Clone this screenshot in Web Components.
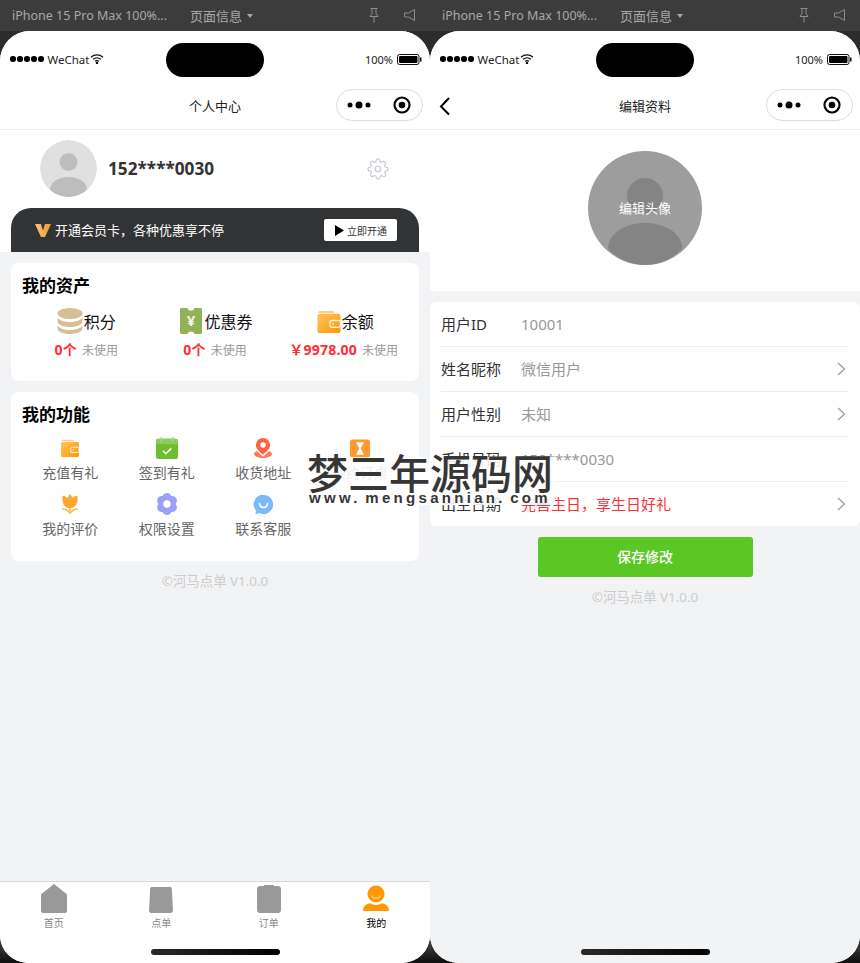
<!DOCTYPE html>
<html lang="zh">
<head>
<meta charset="utf-8">
<title>个人中心</title>
<style>
  html, body { margin: 0; padding: 0; height: 963px; overflow: hidden; }
  body {
    background: linear-gradient(#2c2c2c 0, #2c2c2c 925px, #4a4a4a 938px, #0e0e0e 963px);
    font-family: "Noto Sans", "Noto Sans CJK SC", sans-serif;
    position: relative;
  }
  .screens { display: flex; width: 860px; height: 963px; }
</style>
</head>
<body>
<div class="screens">

  <sim-column title-text="个人中心">
    <profile-head name="152****0030"></profile-head>
    <vip-banner text="开通会员卡，各种优惠享不停" action="立即开通"></vip-banner>
    <page-body>
      <section-card heading="我的资产">
        <div style="display:grid;grid-template-columns:repeat(3,1fr);padding-top:10px">
          <asset-item icon="coins" label="积分" value="0个"></asset-item>
          <asset-item icon="ticket" label="优惠券" value="0个"></asset-item>
          <asset-item icon="wallet" label="余额" value="￥9978.00"></asset-item>
        </div>
      </section-card>
      <section-card heading="我的功能" tall>
        <div style="display:grid;grid-template-columns:repeat(4,1fr);row-gap:10px;padding-top:10px">
          <func-item icon="wallet" label="充值有礼"></func-item>
          <func-item icon="calendar" label="签到有礼"></func-item>
          <func-item icon="pin" label="收货地址"></func-item>
          <func-item icon="hourglass" label="预约订桌"></func-item>
          <func-item icon="tulip" label="我的评价"></func-item>
          <func-item icon="flower" label="权限设置"></func-item>
          <func-item icon="smile" label="联系客服"></func-item>
        </div>
      </section-card>
      <copy-line></copy-line>
    </page-body>
    <tab-bar slot="footer">
      <tab-item icon="home" label="首页"></tab-item>
      <tab-item icon="bag" label="点单"></tab-item>
      <tab-item icon="order" label="订单"></tab-item>
      <tab-item icon="me" label="我的" active></tab-item>
    </tab-bar>
  </sim-column>

  <sim-column title-text="编辑资料" back tinted>
    <avatar-edit></avatar-edit>
    <page-body flush>
      <form-card>
        <form-row label="用户ID" value="10001"></form-row>
        <form-row label="姓名昵称" value="微信用户" arrow></form-row>
        <form-row label="用户性别" value="未知" arrow></form-row>
        <form-row label="手机号码" value="152****0030"></form-row>
        <form-row label="出生日期" value="完善生日，享生日好礼" arrow warn last></form-row>
      </form-card>
      <save-button text="保存修改"></save-button>
      <copy-line></copy-line>
    </page-body>
    <home-bar slot="footer"></home-bar>
  </sim-column>

</div>
<water-mark></water-mark>

<script>
const ICONS = {
  coins: `<svg viewBox="0 0 26 26" width="26" height="26"><g fill="#d5bf93">
    <ellipse cx="13" cy="5.5" rx="12.5" ry="5.5"/>
    <path d="M.5 9.5c2 3 7 4.5 12.5 4.5s10.500-1.500 12.500-4.500v4c0 3-5.500 5.500-12.500 5.500S.5 16.500.5 13.500z"/>
    <path d="M.5 17.500c2 3 7 4.500 12.500 4.500s10.500-1.500 12.500-4.500v3c0 3-5.500 5.500-12.500 5.500S.5 23.500.5 20.500z"/></g></svg>`,
  ticket: `<svg viewBox="0 0 22 26" width="22" height="26">
    <path d="M1.500 0H7.500c.3 1.700 1.700 2.600 3.500 2.600S14.200 1.700 14.500 0h6c.8 0 1.500.7 1.500 1.500v23c0 .8-.7 1.500-1.500 1.500h-6c-.3-1.700-1.700-2.600-3.500-2.600S7.800 24.300 7.500 26h-6C.7 26 0 25.300 0 24.500v-23C0 .7.700 0 1.500 0z" fill="#91b355"/>
    <text x="11" y="18" text-anchor="middle" font-size="15" font-weight="700" fill="#f2f6e8" font-family="Noto Sans, sans-serif">¥</text></svg>`,
  wallet: `<svg viewBox="0 0 24 24" width="100%" height="100%"><defs><linearGradient id="wg" x1="0" y1="0" x2="1" y2="1"><stop offset="0" stop-color="#ffc65c"/><stop offset="1" stop-color="#ff9500"/></linearGradient></defs>
    <path d="M1.500 1h15c.6 0 1 .4 1 1v1h-16.500z" fill="#ffcf80"/>
    <rect x="0" y="4" width="24" height="20" rx="2" fill="url(#wg)"/>
    <rect x="13" y="11" width="11" height="7" rx="2" fill="none" stroke="#fff3dc" stroke-width="1.400"/>
    <circle cx="16.500" cy="14.500" r="1" fill="#fff3dc"/></svg>`,
  calendar: `<svg viewBox="0 0 24 24" width="100%" height="100%">
    <rect x="0" y="2" width="24" height="22" rx="2.500" fill="#6fbe30"/>
    <rect x="0" y="2" width="24" height="6" rx="2.500" fill="#8ccc58"/>
    <rect x="5" y="0" width="1.600" height="5" fill="#a9d983"/><rect x="17.400" y="0" width="1.600" height="5" fill="#a9d983"/>
    <path d="M7.500 15l3.200 3.200 6-5.800" fill="none" stroke="#fff" stroke-width="1.600"/></svg>`,
  pin: `<svg viewBox="0 0 24 24" width="100%" height="100%"><path d="M12 0a8.500 8.500 0 0 1 8.500 8.500c0 4.500-4.500 8.500-8.500 11.500-4-3-8.500-7-8.500-11.500A8.500 8.500 0 0 1 12 0z" fill="#ff6240"/>
    <circle cx="12" cy="8.500" r="3.300" fill="#fff"/>
    <path d="M5 15.500c-2.500.9-3.800 2.200-3.800 3.700C1.200 21.900 6 24 12 24s10.800-2.100 10.800-4.800c0-1.500-1.300-2.800-3.800-3.700-1.600 2.300-4.200 4.600-7 6.600-2.800-2-5.400-4.300-7-6.600z" fill="#ff7a5c"/></svg>`,
  hourglass: `<svg viewBox="0 0 22 20" width="100%" height="100%"><rect width="22" height="20" rx="3" fill="#ff9a2e"/>
    <path d="M7 4h8M7 16h8" stroke="#fff" stroke-width="1.600"/><path d="M8 4.500h6c0 3-2 4-2 5.500s2 2.500 2 5.500H8c0-3 2-4 2-5.500S8 7.500 8 4.500z" fill="#fff"/></svg>`,
  tulip: `<svg viewBox="0 0 24 24" width="100%" height="100%">
    <path d="M3 2c3 .3 5 1.500 6 3 .7-2 1.700-3.600 3-5 1.300 1.400 2.300 3 3 5 1-1.500 3-2.700 6-3 .5 7-.5 14-9 15C3.500 16 2.500 9 3 2z" fill="#ffa52c"/>
    <path d="M12 17v6M2.500 18c3.500 0 7 1.700 9.500 5 2.500-3.300 6-5 9.500-5" fill="none" stroke="#ffb650" stroke-width="1.800"/></svg>`,
  flower: `<svg viewBox="0 0 24 24" width="100%" height="100%"><path fill-rule="evenodd" fill="#9aa2f8" d="M12 0c2.300 0 4 1.400 4.700 3.300 2-.4 4.200.4 5.400 2.300 1.100 2 .8 4.300-.5 5.900-.2.300-.2.700 0 1 1.300 1.600 1.600 3.900.5 5.900-1.200 1.900-3.400 2.700-5.400 2.300C16 22.600 14.300 24 12 24s-4-1.400-4.700-3.300c-2 .4-4.200-.4-5.400-2.300-1.100-2-.8-4.300.5-5.900.2-.3.200-.7 0-1C1.100 9.900.8 7.600 1.900 5.600 3.100 3.700 5.300 2.900 7.300 3.300 8 1.400 9.700 0 12 0zm0 8a4 4 0 1 0 0 8 4 4 0 0 0 0-8z"/></svg>`,
  smile: `<svg viewBox="0 0 24 24" width="100%" height="100%"><path d="M12 1a11 11 0 1 1-5 20.800c-1.400.8-3 1.200-4.800 1.200 1-1.100 1.400-2.400 1.300-3.800A11 11 0 0 1 12 1z" fill="#7db8fb"/>
    <path d="M7.500 11c.5 3 2.300 4.500 4.500 4.500s4-1.500 4.500-4.500" fill="none" stroke="#fff" stroke-width="1.800" stroke-linecap="round"/></svg>`,
  home: `<svg viewBox="0 0 26 29" width="26" height="29"><path d="M13 0l12 9.500c.6.500 1 1.200 1 2V27c0 1.100-.9 2-2 2H2c-1.100 0-2-.9-2-2V11.500c0-.8.400-1.500 1-2z" fill="#999"/></svg>`,
  bag: `<svg viewBox="0 0 24 26" width="24" height="26"><path d="M3 0h18c1 0 1.700.7 1.800 1.600L24 23.500c.1 1.400-1 2.500-2.400 2.500H2.400C1 26-.1 24.900 0 23.500L1.200 1.600C1.300.7 2 0 3 0z" fill="#999"/></svg>`,
  order: `<svg viewBox="0 0 24 28" width="24" height="28"><path d="M7 1c0-.6.400-1 1-1h8c.6 0 1 .4 1 1h4c1.700 0 3 1.300 3 3V25c0 1.700-1.300 3-3 3H3c-1.700 0-3-1.300-3-3V4c0-1.700 1.300-3 3-3z" fill="#999"/></svg>`,
  me: `<svg viewBox="0 0 26 26" width="26" height="26"><circle cx="13" cy="9" r="8.500" fill="#ff9800"/>
    <path d="M8.500 10.500c1 2 2.700 3 4.500 3s3.500-1 4.500-3" fill="none" stroke="#ffd28a" stroke-width="1.200"/>
    <path d="M0 25c.5-4 3.500-6.200 7-6.700 3.500 2.200 8.500 2.200 12 0 3.500.5 6.500 2.700 7 6.700 0 .6-.4 1-1 1H1c-.6 0-1-.4-1-1z" fill="#ff9800"/></svg>`
};

class SimColumn extends HTMLElement {
  constructor() {
    super();
    this.attachShadow({ mode: 'open' });
  }
  connectedCallback() {
    const titulo = this.getAttribute('title-text') || '';
    const back = this.hasAttribute('back');
    const tinted = this.hasAttribute('tinted');
    this.shadowRoot.innerHTML = `
      <style>
        :host { display: flex; flex-direction: column; width: 430px; height: 963px; }
        .toolbar {
          height: 31px;
          flex: none;
          background: #3c3c3c;
          display: flex;
          align-items: center;
          color: #a8a8a8;
          font-size: 12.500px;
          padding: 0 0 1px 12px;
          box-sizing: border-box;
        }
        .device { width: 178px; white-space: nowrap; }
        .info { font-size: 13px; display: flex; align-items: center; gap: 5px; flex: 1; }
        .caret { width: 0; height: 0; border: 3px solid transparent; border-top: 4px solid #a8a8a8; border-bottom: 0; margin-top: 2px; }
        .tools { display: flex; gap: 23px; align-items: center; padding-right: 14px; }
        .phone {
          flex: 1;
          min-height: 0;
          display: flex;
          flex-direction: column;
          background: ${tinted ? '#f2f3f5' : '#fff'};
          border-radius: 30px 30px 28px 28px;
          overflow: hidden;
        }
        .status {
          height: 52px;
          flex: none;
          background: #fff;
          display: grid;
          grid-template-columns: 1fr 98px 1fr;
          box-sizing: border-box;
          padding: 12px 8px 0 8px;
          font-size: 11.500px;
          color: #222;
        }
        .island { height: 34px; background: #000; border-radius: 17px; }
        .st-left, .st-right { display: flex; align-items: center; height: 32px; }
        .st-left { gap: 4px; padding-left: 2px; }
        .st-right { justify-content: flex-end; gap: 4px; font-size: 11px; }
        .dots { display: flex; gap: 1.500px; }
        .dots i { width: 5.500px; height: 5.500px; border-radius: 50%; background: #000; }
        .nav {
          height: 46px;
          flex: none;
          background: #fff;
          border-bottom: 1px solid #eeeeee;
          display: grid;
          grid-template-columns: 1fr auto 1fr;
          align-items: center;
          font-size: 13px;
          color: #222;
          padding-right: 7px;
          padding-left: 7px;
        }
        .nav-title { padding-bottom: 2px; }
        .back { display: flex; }
        .capsule {
          justify-self: end;
          width: 87px;
          height: 32px;
          box-sizing: border-box;
          margin-bottom: 2px;
          border: 1px solid #dddddd;
          border-radius: 16px;
          display: flex;
          align-items: center;
          justify-content: space-between;
          padding: 0 11px 0 10px;
        }
        .content { flex: 1; min-height: 0; display: flex; flex-direction: column; }
        ::slotted([slot="footer"]) { flex: none; }
      </style>
      <div class="toolbar">
        <span class="device">iPhone 15 Pro Max 100%...</span>
        <span class="info">页面信息<i class="caret"></i></span>
        <span class="tools">
          <svg width="12" height="16" viewBox="0 0 12 16" fill="none" stroke="#8d8d8d"><path d="M2.500 1.500h7M4 1.500v5L2 9.500h8L8 6.500v-5M6 9.500v6"/></svg>
          <svg width="13" height="16" viewBox="0 0 13 16" fill="none" stroke="#8d8d8d"><path d="M11.500 2.500v11L5.500 10H1.500V6h4z"/></svg>
        </span>
      </div>
      <div class="phone">
        <div class="status">
          <div class="st-left">
            <span class="dots"><i></i><i></i><i></i><i></i><i></i></span>
            <span>WeChat</span>
            <svg width="14" height="10" viewBox="0 0 14 10" fill="none" stroke="#111" stroke-width="1.300" style="margin-left:-3px"><path d="M1 3.200c3.400-3 8.600-3 12 0M3 5.300c2.300-2 5.700-2 8 0M5 7.300c1.200-.9 2.800-.9 4 0"/><circle cx="7" cy="9" r=".6"/></svg>
          </div>
          <div class="island"></div>
          <div class="st-right">
            <span>100%</span>
            <svg width="25" height="11" viewBox="0 0 25 11"><rect x=".5" y=".5" width="21.500" height="10" rx="2" fill="none" stroke="#111"/><rect x="2" y="2" width="18.500" height="7" rx="1" fill="#000"/><rect x="23" y="3.500" width="1.500" height="4" fill="#111"/></svg>
          </div>
        </div>
        <div class="nav">
          <span class="back">${back ? `<svg width="14" height="20" viewBox="0 0 14 20" fill="none" stroke="#000" stroke-width="2"><path d="M12 2L4 10.500 12 18.500"/></svg>` : ''}</span>
          <span class="nav-title">${titulo}</span>
          <span class="capsule">
            <svg width="24" height="10" viewBox="0 0 24 10" fill="#000"><circle cx="3" cy="5" r="2.500"/><circle cx="12" cy="5" r="3.500"/><circle cx="21" cy="5" r="2.500"/></svg>
            <svg width="18" height="18" viewBox="0 0 18 18"><circle cx="9" cy="9" r="7.500" fill="none" stroke="#000" stroke-width="2.200"/><circle cx="9" cy="9" r="3.300" fill="#000"/></svg>
          </span>
        </div>
        <div class="content"><slot></slot></div>
        <slot name="footer"></slot>
      </div>`;
  }
}

class ProfileHead extends HTMLElement {
  constructor() { super(); this.attachShadow({ mode: 'open' }); }
  connectedCallback() {
    this.shadowRoot.innerHTML = `
      <style>
        :host { display: flex; align-items: center; background: #fff; padding: 10px 41px 11px 40px; flex: none; }
        .avatar { width: 57px; height: 57px; display: block; border-radius: 50%; }
        .name { flex: 1; margin-left: 11px; font-size: 17.200px; font-weight: 700; color: #333; }
      </style>
      <svg class="avatar" viewBox="0 0 57 57"><circle cx="28.500" cy="28.500" r="28.500" fill="#e0e0e0"/><circle cx="28.500" cy="22" r="9" fill="#bdbdbd"/><path d="M10 50c0-8 8.500-13 18.500-13S47 42 47 50c-5 4.500-11.500 7-18.500 7S15 54.500 10 50z" fill="#bdbdbd"/></svg>
      <span class="name">${this.getAttribute('name')}</span>
      <svg width="22" height="22" viewBox="0 0 24 24" fill="none" stroke="#c6cad2" stroke-width="1.300"><circle cx="12" cy="12" r="3"/><path d="M19.400 15a1.650 1.650 0 0 0 .33 1.820l.06.06a2 2 0 0 1 0 2.830 2 2 0 0 1-2.830 0l-.06-.06a1.650 1.650 0 0 0-1.820-.33 1.650 1.650 0 0 0-1 1.510V21a2 2 0 0 1-2 2 2 2 0 0 1-2-2v-.09A1.650 1.650 0 0 0 9 19.400a1.650 1.650 0 0 0-1.820.33l-.06.06a2 2 0 0 1-2.830 0 2 2 0 0 1 0-2.830l.06-.06a1.650 1.650 0 0 0 .33-1.820 1.650 1.650 0 0 0-1.510-1H3a2 2 0 0 1-2-2 2 2 0 0 1 2-2h.09A1.650 1.650 0 0 0 4.600 9a1.650 1.650 0 0 0-.33-1.820l-.06-.06a2 2 0 0 1 0-2.830 2 2 0 0 1 2.830 0l.06.06a1.650 1.650 0 0 0 1.820.33H9a1.650 1.650 0 0 0 1-1.510V3a2 2 0 0 1 2-2 2 2 0 0 1 2 2v.09a1.650 1.650 0 0 0 1 1.510 1.650 1.650 0 0 0 1.820-.33l.06-.06a2 2 0 0 1 2.830 0 2 2 0 0 1 0 2.830l-.06.06a1.650 1.650 0 0 0-.33 1.820V9a1.650 1.650 0 0 0 1.510 1H21a2 2 0 0 1 2 2 2 2 0 0 1-2 2h-.09a1.650 1.650 0 0 0-1.510 1z"/></svg>`;
  }
}

class VipBanner extends HTMLElement {
  constructor() { super(); this.attachShadow({ mode: 'open' }); }
  connectedCallback() {
    this.shadowRoot.innerHTML = `
      <style>
        :host { display: block; background: #fff; padding: 0 11px; flex: none; }
        .bar {
          height: 44px;
          background: #323335;
          border-radius: 20px 20px 0 0;
          display: flex;
          align-items: center;
          padding: 0 22px 0 24px;
          color: #fff;
          font-size: 13px;
        }
        .txt { flex: 1; margin-left: 4px; padding-bottom: 2px; }
        .btn {
          width: 73px;
          height: 22px;
          background: #fff;
          border-radius: 2px;
          color: #333;
          font-size: 10px;
          display: flex;
          align-items: center;
          justify-content: center;
          gap: 3px;
          padding-left: 1px;
          box-sizing: border-box;
        }
      </style>
      <div class="bar">
        <svg width="16" height="13" viewBox="0 0 16 13"><defs><linearGradient id="vg" x1="0" y1="0" x2="1" y2="0"><stop offset="0" stop-color="#f7c483"/><stop offset="1" stop-color="#f39a2c"/></linearGradient></defs><path d="M0 0h6l2 6.500L10 0h6L10 13H6z" fill="url(#vg)"/></svg>
        <span class="txt">${this.getAttribute('text')}</span>
        <span class="btn"><svg width="9" height="11" viewBox="0 0 9 11"><path d="M0 0l9 5.500-9 5.500z" fill="#000"/></svg>${this.getAttribute('action')}</span>
      </div>`;
  }
}

class PageBody extends HTMLElement {
  constructor() { super(); this.attachShadow({ mode: 'open' }); }
  connectedCallback() {
    const flush = this.hasAttribute('flush');
    this.shadowRoot.innerHTML = `
      <style>
        :host { display: flex; flex-direction: column; gap: 11px; flex: 1; background: #f2f3f5; padding: 11px ${flush ? '0' : '11px'} 0; }
      </style>
      <slot></slot>`;
  }
}

class SectionCard extends HTMLElement {
  constructor() { super(); this.attachShadow({ mode: 'open' }); }
  connectedCallback() {
    this.shadowRoot.innerHTML = `
      <style>
        :host { display: block; background: #fff; border-radius: 8px; padding: 11px 11px 20px; }
        :host([tall]) { padding-bottom: 22px; }
        h2 { margin: 0; font-size: 17px; line-height: 24px; font-weight: 700; color: #000; }
      </style>
      <h2>${this.getAttribute('heading')}</h2>
      <slot></slot>`;
  }
}

class AssetItem extends HTMLElement {
  constructor() { super(); this.attachShadow({ mode: 'open' }); }
  connectedCallback() {
    this.shadowRoot.innerHTML = `
      <style>
        :host { display: flex; flex-direction: column; align-items: center; }
        .top { display: flex; align-items: center; height: 26px; font-size: 16px; color: #111; gap: 1px; }
        :host([icon="ticket"]) .top { margin-left: 2px; }
        :host([icon="wallet"]) .top { margin-left: 3px; }
        .top span:last-child { padding-bottom: 1px; }
        .ic { display: flex; width: 26px; height: 26px; align-items: center; justify-content: center; }
        :host([icon="ticket"]) .ic { width: 24px; }
        :host([icon="wallet"]) .ic { width: 24px; height: 23px; }
        .sub { margin-top: 6px; display: flex; align-items: baseline; gap: 5px; font-size: 12px; line-height: 20px; color: #999; }
        .sub b { font-size: 14px; color: #ff2d37; font-weight: 700; letter-spacing: .2px; }
      </style>
      <div class="top"><span class="ic">${ICONS[this.getAttribute('icon')]}</span><span>${this.getAttribute('label')}</span></div>
      <div class="sub"><b>${this.getAttribute('value')}</b><span>未使用</span></div>`;
  }
}

class FuncItem extends HTMLElement {
  constructor() { super(); this.attachShadow({ mode: 'open' }); }
  connectedCallback() {
    this.shadowRoot.innerHTML = `
      <style>
        :host { display: flex; flex-direction: column; align-items: center; gap: 4px; font-size: 14px; line-height: 20px; color: #666; }
        .ic { width: 22px; height: 22px; display: flex; align-items: center; justify-content: center; }
        .ic svg { display: block; }
        :host([icon="wallet"]) .ic svg { width: 18px; height: 18px; }
        :host([icon="pin"]) .ic svg { width: 20px; height: 20px; }
        :host([icon="hourglass"]) .ic svg { width: 20px; height: 19px; }
        :host([icon="tulip"]) .ic svg { width: 20px; height: 20px; }
        :host([icon="smile"]) .ic svg { width: 21px; height: 21px; }
      </style>
      <span class="ic">${ICONS[this.getAttribute('icon')]}</span>
      <span>${this.getAttribute('label')}</span>`;
  }
}

class CopyLine extends HTMLElement {
  constructor() { super(); this.attachShadow({ mode: 'open' }); }
  connectedCallback() {
    this.shadowRoot.innerHTML = `
      <style>
        :host { display: block; text-align: center; color: #cccccc; font-size: 13.400px; line-height: 20px; margin-top: -1px; }
      </style>
      ©河马点单 V1.0.0`;
  }
}

class TabBar extends HTMLElement {
  constructor() { super(); this.attachShadow({ mode: 'open' }); }
  connectedCallback() {
    this.shadowRoot.innerHTML = `
      <style>
        :host { display: block; background: #fff; border-top: 1px solid #d9d9d9; height: 81px; position: relative; }
        .row { display: grid; grid-template-columns: repeat(4, 1fr); }
        .home { position: absolute; left: 151px; top: 67px; width: 129px; height: 6px; border-radius: 3px; background: linear-gradient(90deg, #2a2a2a, #000); }
      </style>
      <div class="row"><slot></slot></div>
      <div class="home"></div>`;
  }
}

class TabItem extends HTMLElement {
  constructor() { super(); this.attachShadow({ mode: 'open' }); }
  connectedCallback() {
    this.shadowRoot.innerHTML = `
      <style>
        :host { display: flex; flex-direction: column; align-items: center; font-size: 10px; line-height: 14px; color: #888; gap: 3px; }
        :host([active]) { color: #000; }
        .ic { height: 31px; display: flex; align-items: flex-end; }
        :host([active]) .ic { height: 29px; margin-bottom: 2px; }
      </style>
      <span class="ic">${ICONS[this.getAttribute('icon')]}</span>
      <span>${this.getAttribute('label')}</span>`;
  }
}

class HomeBar extends HTMLElement {
  constructor() { super(); this.attachShadow({ mode: 'open' }); }
  connectedCallback() {
    this.shadowRoot.innerHTML = `
      <style>
        :host { display: flex; justify-content: center; background: #f2f3f5; padding-bottom: 8px; }
        div { width: 129px; height: 6px; border-radius: 3px; background: linear-gradient(90deg, #2a2a2a, #000); }
      </style>
      <div></div>`;
  }
}

class AvatarEdit extends HTMLElement {
  constructor() { super(); this.attachShadow({ mode: 'open' }); }
  connectedCallback() {
    this.shadowRoot.innerHTML = `
      <style>
        :host { display: flex; justify-content: center; background: #fff; padding: 21px 0 26px; flex: none; }
        .wrap { width: 114px; height: 114px; position: relative; }
        svg { display: block; }
        .lbl { position: absolute; inset: 0 0 2px; display: flex; align-items: center; justify-content: center; color: #fff; font-size: 13px; }
      </style>
      <div class="wrap">
        <svg width="114" height="114" viewBox="0 0 114 114"><circle cx="57" cy="57" r="57" fill="#9d9d9d"/><circle cx="57" cy="45" r="18" fill="#848484"/><path d="M20 98c0-16 17-26 37-26s37 10 37 26c-10 10-23 16-37 16s-27-6-37-16z" fill="#848484"/></svg>
        <div class="lbl">编辑头像</div>
      </div>`;
  }
}

class FormCard extends HTMLElement {
  constructor() { super(); this.attachShadow({ mode: 'open' }); }
  connectedCallback() {
    this.shadowRoot.innerHTML = `
      <style>
        :host { display: block; background: #fff; border-radius: 6px; padding: 0 11px; }
      </style>
      <slot></slot>`;
  }
}

class FormRow extends HTMLElement {
  constructor() { super(); this.attachShadow({ mode: 'open' }); }
  connectedCallback() {
    const arrow = this.hasAttribute('arrow');
    this.shadowRoot.innerHTML = `
      <style>
        :host {
          display: flex;
          align-items: center;
          height: 45px;
          box-sizing: border-box;
          border-bottom: 1px solid #eeeeee;
          font-size: 15px;
        }
        :host([last]) { border-bottom: 0; height: 44px; }
        .lbl { width: 80px; color: #333; padding-bottom: 2px; }
        .val { flex: 1; color: #999; padding-bottom: 1px; }
        :host([warn]) .val { color: #ff2d37; }
        svg { margin-right: 3px; }
      </style>
      <span class="lbl">${this.getAttribute('label')}</span>
      <span class="val">${this.getAttribute('value')}</span>
      ${arrow ? `<svg width="9" height="14" viewBox="0 0 9 14" fill="none" stroke="#999" stroke-width="1.200"><path d="M1 1l6.500 6L1 13"/></svg>` : ''}`;
  }
}

class SaveButton extends HTMLElement {
  constructor() { super(); this.attachShadow({ mode: 'open' }); }
  connectedCallback() {
    this.shadowRoot.innerHTML = `
      <style>
        :host { display: flex; justify-content: center; }
        div { width: 215px; height: 40px; background: #5ac725; border-radius: 3px; color: #fff; font-size: 14px; font-weight: 500; display: flex; align-items: center; justify-content: center; padding-bottom: 2px; box-sizing: border-box; }
      </style>
      <div>${this.getAttribute('text')}</div>`;
  }
}

class WaterMark extends HTMLElement {
  constructor() { super(); this.attachShadow({ mode: 'open' }); }
  connectedCallback() {
    this.shadowRoot.innerHTML = `
      <style>
        :host {
          position: absolute;
          left: 305px;
          top: 457px;
          width: 250px;
          height: 48px;
          background: rgba(255,255,255,.88);
          text-align: center;
          color: #363636;
          white-space: nowrap;
        }
        .big { font-size: 41px; line-height: 33px; font-weight: 500; margin: 0 -1px; }
        .small { font-family: "Liberation Sans", sans-serif; font-size: 15px; line-height: 12px; margin-top: 2px; font-weight: 700; letter-spacing: 3.300px; word-spacing: -3px; }
      </style>
      <div class="big">梦三年源码网</div>
      <div class="small">www. mengsannian. com</div>`;
  }
}

customElements.define('sim-column', SimColumn);
customElements.define('profile-head', ProfileHead);
customElements.define('vip-banner', VipBanner);
customElements.define('page-body', PageBody);
customElements.define('section-card', SectionCard);
customElements.define('asset-item', AssetItem);
customElements.define('func-item', FuncItem);
customElements.define('copy-line', CopyLine);
customElements.define('tab-bar', TabBar);
customElements.define('tab-item', TabItem);
customElements.define('home-bar', HomeBar);
customElements.define('avatar-edit', AvatarEdit);
customElements.define('form-card', FormCard);
customElements.define('form-row', FormRow);
customElements.define('save-button', SaveButton);
customElements.define('water-mark', WaterMark);
</script>
</body>
</html>
